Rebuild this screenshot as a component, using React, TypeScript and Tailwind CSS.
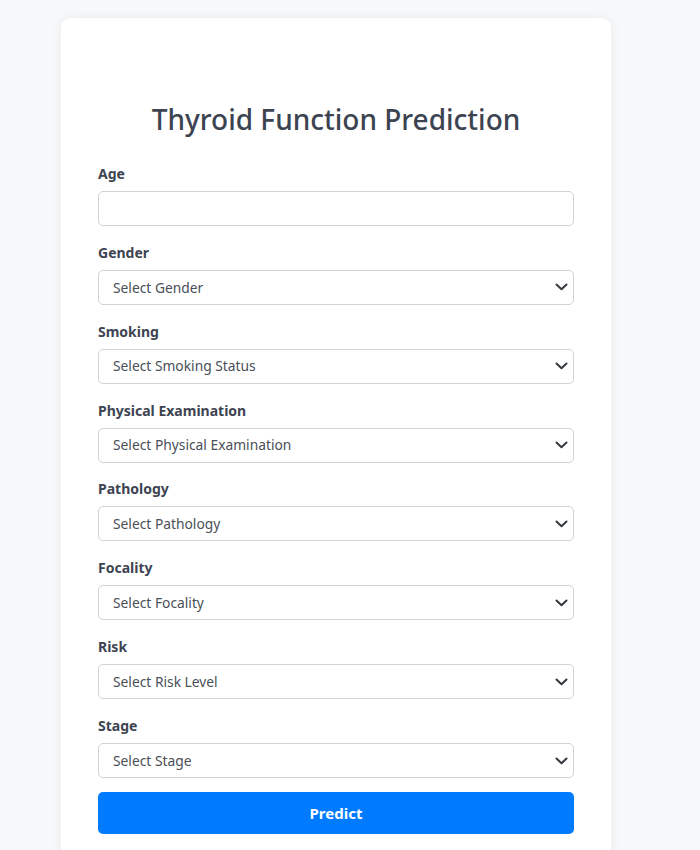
import React from "react";

const fields: { label: string; placeholder?: string; input?: boolean }[] = [
  { label: "Age", input: true },
  { label: "Gender", placeholder: "Select Gender" },
  { label: "Smoking", placeholder: "Select Smoking Status" },
  { label: "Physical Examination", placeholder: "Select Physical Examination" },
  { label: "Pathology", placeholder: "Select Pathology" },
  { label: "Focality", placeholder: "Select Focality" },
  { label: "Risk", placeholder: "Select Risk Level" },
  { label: "Stage", placeholder: "Select Stage" },
];

function Chevron() {
  return (
    <svg
      className="pointer-events-none absolute right-[6px] top-1/2 -translate-y-1/2"
      width="13"
      height="8"
      viewBox="0 0 13 8"
      fill="none"
      stroke="#343a40"
      strokeWidth="2"
      strokeLinecap="round"
      strokeLinejoin="round"
    >
      <path d="M1.5 1.5 6.5 6.3 11.5 1.5" />
    </svg>
  );
}

export default function App() {
  return (
    <div
      className="min-h-[850px] bg-[#f7f8fa] pt-[18px]"
      style={{ fontFamily: '"Noto Sans", "Open Sans", sans-serif' }}
    >
      <div className="ml-[61px] w-[550px] rounded-t-[9px] bg-white px-[37px] pb-[40px] pt-[82px] shadow-[0_0_12px_rgba(0,0,0,0.06)]">
        <h2 className="mb-[25px] text-center text-[28px] font-medium leading-[38px] text-[#3d4451]">
          Thyroid Function Prediction
        </h2>
        <form onSubmit={(e) => e.preventDefault()}>
          {fields.map((f) => (
            <div key={f.label} className="mb-[15.86px]">
              <label className="mb-[7px] block text-[14px] font-bold leading-[21px] text-[#3d4451]">
                {f.label}
              </label>
              {f.input ? (
                <input
                  type="number"
                  className="block h-[35px] w-full rounded-[5px] border border-[#ced4da] bg-white px-[14px] text-[14px] text-[#495057] outline-none"
                />
              ) : (
                <div className="relative">
                  <select
                    defaultValue=""
                    className="block h-[35px] w-full appearance-none rounded-[5px] border border-[#ced4da] bg-white pl-[14px] pr-[36px] pt-[1px] text-[13.8px] text-[#495057] outline-none"
                  >
                    <option value="" disabled>
                      {f.placeholder}
                    </option>
                  </select>
                  <Chevron />
                </div>
              )}
            </div>
          ))}
          <button
            type="submit"
            className="mt-[-2px] block h-[42px] w-full rounded-[5px] bg-[#007bff] text-[15px] font-bold text-white"
          >
            Predict
          </button>
        </form>
      </div>
    </div>
  );
}
